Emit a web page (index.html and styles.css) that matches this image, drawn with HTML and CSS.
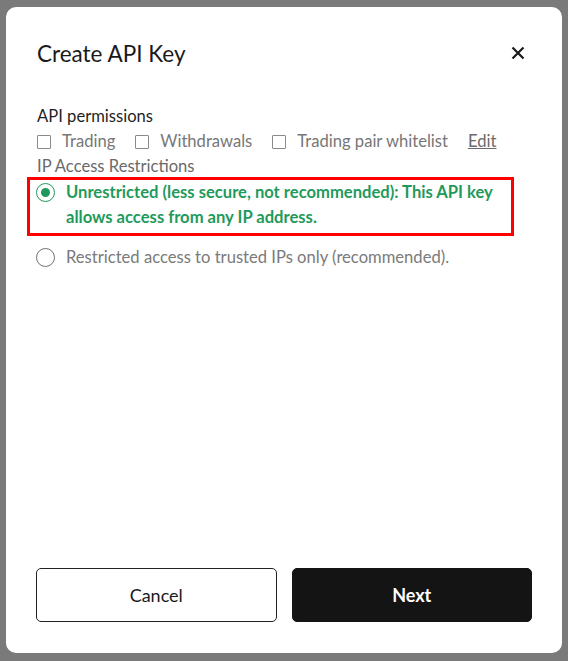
FILE: index.html
```html
<!DOCTYPE html>
<html lang="en">

<head>
    <meta charset="UTF-8">
    <meta name="viewport" content="width=device-width, initial-scale=1.0">
    <title>Create API Key</title>
    <link rel="stylesheet" href="styles.css">
</head>

<body>
    <div class="modal">
        <div class="modal-head">
            <h1 class="modal-title">Create API Key</h1>
            <button class="close" aria-label="Close">
                <svg width="14" height="14" viewBox="0 0 14 14">
                    <path d="M1.5 1.5 L12.5 12.5 M12.5 1.5 L1.5 12.5" stroke="#1a1a1a" stroke-width="2.2" fill="none" />
                </svg>
            </button>
        </div>

        <div class="section">
            <p class="label">API permissions</p>
            <div class="checks">
                <label class="check"><span class="box"></span>Trading</label>
                <label class="check"><span class="box"></span>Withdrawals</label>
                <label class="check"><span class="box"></span>Trading pair whitelist</label>
                <a class="edit" href="#">Edit</a>
            </div>
            <p class="sub">IP Access Restrictions</p>
        </div>

        <!-- ip options -->
        <div class="options">
            <div class="option selected highlight">
                <span class="radio"></span>
                <span class="option-text">Unrestricted (less secure, not recommended): This API key allows access from any IP address.</span>
            </div>
            <div class="option">
                <span class="radio"></span>
                <span class="option-text">Restricted access to trusted IPs only (recommended).</span>
            </div>
        </div>

        <div class="actions">
            <button class="btn btn-outline">Cancel</button>
            <button class="btn btn-dark">Next</button>
        </div>
    </div>
</body>

</html>
```

FILE: styles.css
```css
* {
    margin: 0;
    padding: 0;
    box-sizing: border-box;
}

body {
    background: #7a7a7a;
    font-family: Lato, "Noto Sans", sans-serif;
    color: #1a1a1a;
    padding: 7px 6px 8px 6px;
}

.modal {
    background: #fff;
    border-radius: 10px;
    height: 646px;
    padding: 29px 30px 31px 30px;
    display: flex;
    flex-direction: column;
}

/* head */
.modal-head {
    display: flex;
    justify-content: space-between;
    align-items: center;
    height: 34px;
    margin-bottom: 34px;
}

.modal-title {
    font-size: 22.5px;
    font-weight: 400;
    color: #1a1a1a;
    padding-left: 1px;
}

.close {
    border: 0;
    background: none;
    width: 14px;
    height: 14px;
    margin-right: 7px;
    display: flex;
}

/* permissions */
.section {
    padding-left: 1px;
    font-size: 16.6px;
    line-height: 25px;
}

.label {
    color: #1f1f1f;
}

.checks {
    display: flex;
    align-items: center;
    color: #777;
}

.check {
    display: flex;
    align-items: center;
    margin-right: 20px;
}

.box {
    display: inline-block;
    width: 14px;
    height: 14px;
    border: 1.5px solid #8a8a8a;
    border-radius: 1px;
    margin-right: 11px;
}

.edit {
    color: #6a6a6a;
    text-decoration: underline;
}

.sub {
    color: #6a6a6a;
}

/* options */
.options {
    font-size: 16.6px;
    line-height: 25px;
}

.option {
    display: flex;
    align-items: flex-start;
    color: #7a7a7a;
    padding: 4px 6px 4px 0;
}

.option.highlight {
    border: 3px solid #f00;
    margin: -2px 0 5px -9px;
    width: 487px;
    padding: 0 10px 3px 6px;
}

.radio {
    flex: none;
    width: 19px;
    height: 19px;
    border: 1.5px solid #707070;
    border-radius: 50%;
    margin: 3px 11px 0 0;
    position: relative;
}

.selected .radio {
    border-color: #1f9a5c;
}

.selected .radio::after {
    content: "";
    position: absolute;
    top: 3.5px;
    left: 3.5px;
    width: 9px;
    height: 9px;
    border-radius: 50%;
    background: #1f9a5c;
}

.selected .option-text {
    color: #1f9a5c;
    font-weight: 700;
}

/* buttons */
.actions {
    margin-top: auto;
    display: flex;
    gap: 15px;
}

.btn {
    flex: 1;
    height: 54px;
    border-radius: 5px;
    font-family: inherit;
    font-size: 18px;
}

.btn-outline {
    background: #fff;
    border: 1px solid #222;
    color: #1a1a1a;
}

.btn-dark {
    background: #141414;
    border: 1px solid #141414;
    color: #fff;
    font-weight: 700;
}
```
